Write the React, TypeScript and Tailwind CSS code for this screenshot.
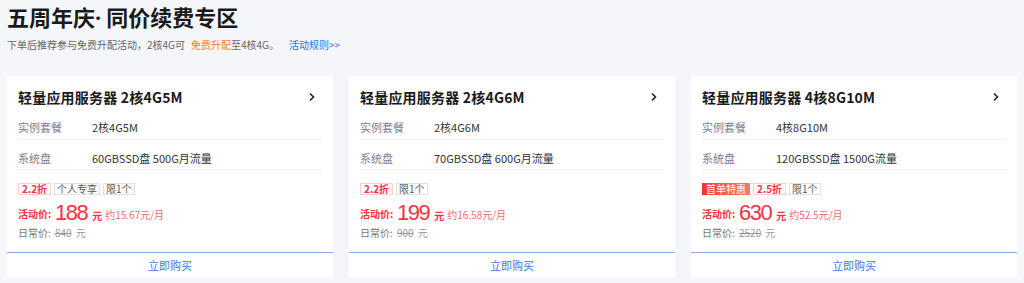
import React from 'react';

interface Plan {
  title: string;
  spec: string;
  disk: string;
  tags: { text: string; kind: 'red' | 'gray' | 'fill' }[];
  price: string;
  monthly: string;
  original: string;
}

const plans: Plan[] = [
  {
    title: '轻量应用服务器 2核4G5M',
    spec: '2核4G5M',
    disk: '60GBSSD盘 500G月流量',
    tags: [
      { text: '2.2折', kind: 'red' },
      { text: '个人专享', kind: 'gray' },
      { text: '限1个', kind: 'gray' },
    ],
    price: '188',
    monthly: '约15.67元/月',
    original: '840',
  },
  {
    title: '轻量应用服务器 2核4G6M',
    spec: '2核4G6M',
    disk: '70GBSSD盘 600G月流量',
    tags: [
      { text: '2.2折', kind: 'red' },
      { text: '限1个', kind: 'gray' },
    ],
    price: '199',
    monthly: '约16.58元/月',
    original: '900',
  },
  {
    title: '轻量应用服务器 4核8G10M',
    spec: '4核8G10M',
    disk: '120GBSSD盘 1500G流量',
    tags: [
      { text: '首单特惠', kind: 'fill' },
      { text: '2.5折', kind: 'red' },
      { text: '限1个', kind: 'gray' },
    ],
    price: '630',
    monthly: '约52.5元/月',
    original: '2520',
  },
];

const Tag: React.FC<{ text: string; kind: 'red' | 'gray' | 'fill' }> = ({ text, kind }) => {
  if (kind === 'fill') {
    return (
      <span className="px-[4px] h-[12px] leading-[12px] text-[10px] text-white bg-gradient-to-r from-[#f2362f] to-[#ff7b63]">
        {text}
      </span>
    );
  }
  return (
    <span
      className={
        kind === 'red'
          ? 'px-[3px] h-[12px] leading-[10px] text-[10px] font-bold border border-[#ffd0d0] text-[#f5333f]'
          : 'px-[2px] h-[12px] leading-[10px] text-[10px] border border-[#dde2ea] text-[#555]'
      }
    >
      {text}
    </span>
  );
};

const Card: React.FC<{ plan: Plan }> = ({ plan }) => (
  <div className="flex-1 bg-white flex flex-col">
    <div className="px-[11px]">
      <div className="pt-[11px] flex items-center justify-between">
        <h3 className="text-[14px] leading-[20px] font-bold text-[#1a1a1a] tracking-[0.2px]">{plan.title}</h3>
        <svg width="8" height="10" viewBox="0 0 8 10" className="mr-[6px]">
          <path d="M2 1.5 L5.5 5 L2 8.5" fill="none" stroke="#222" strokeWidth="1.6" />
        </svg>
      </div>
      <div className="pt-[13px] pb-[5px] leading-[14px] text-[11px] flex border-b border-[#eef0f3]">
        <span className="w-[74px] text-[#7a8194]">实例套餐</span>
        <span className="text-[#333]">{plan.spec}</span>
      </div>
      <div className="pt-[11px] pb-[4px] leading-[14px] text-[11px] flex border-b border-[#eef0f3]">
        <span className="w-[74px] text-[#7a8194]">系统盘</span>
        <span className="text-[#333]">{plan.disk}</span>
      </div>
      <div className="mt-[13px] flex gap-[3px]">
        {plan.tags.map((t, i) => (
          <Tag key={i} text={t.text} kind={t.kind} />
        ))}
      </div>
      <div className="mt-[5px] h-[26px] flex items-center">
        <span className="text-[10px] font-bold text-[#f5333f] w-[37px]">活动价:</span>
        <span
          className="text-[22px] leading-[26px] text-[#f5333f] tracking-[-1.5px]"
          style={{ fontFamily: '"Liberation Sans", Arial, sans-serif' }}
        >
          {plan.price}
        </span>
        <span className="ml-[5px] mt-[4px] text-[10px] font-bold text-[#f5333f]">元</span>
        <span className="ml-[3px] mt-[3px] text-[10px] text-[#f46b6b]">{plan.monthly}</span>
      </div>
      <div className="h-[14px] flex items-center text-[10px] leading-[14px]">
        <span className="w-[37px] text-[#777]">日常价:</span>
        <span className="text-[#999] line-through">{plan.original}</span>
        <span className="ml-[4px] text-[#999]">元</span>
      </div>
    </div>
    <div className="mt-[12px] h-[25px] border-t border-[#86a8e8] flex items-center justify-center text-[11px] text-[#3d7ae0]">
      立即购买
    </div>
  </div>
);

export default function App() {
  return (
    <div
      className="w-[1024px] h-[283px] bg-[#f4f6fa] px-[7px] overflow-hidden"
      style={{ fontFamily: '"Noto Sans CJK SC", "Noto Sans", sans-serif' }}
    >
      <h1 className="pt-[5px] text-[22px] leading-[22px] font-bold text-[#1a1a1a]">
        五周年庆<span style={{ fontFamily: '"Noto Sans", sans-serif' }}>·</span> 同价续费专区
      </h1>
      <p className="mt-[10px] text-[10px] leading-[14px] text-[#666]">
        下单后推荐参与免费升配活动，2核4G可<span className="ml-[6px] text-[#ff7d1a]">免费升配</span>至4核4G。
        <span className="ml-[10px] text-[#2f6fe0]">活动规则&gt;&gt;</span>
      </p>
      <div className="mt-[24px] flex gap-4">
        {plans.map((p, i) => (
          <Card key={i} plan={p} />
        ))}
      </div>
    </div>
  );
}
